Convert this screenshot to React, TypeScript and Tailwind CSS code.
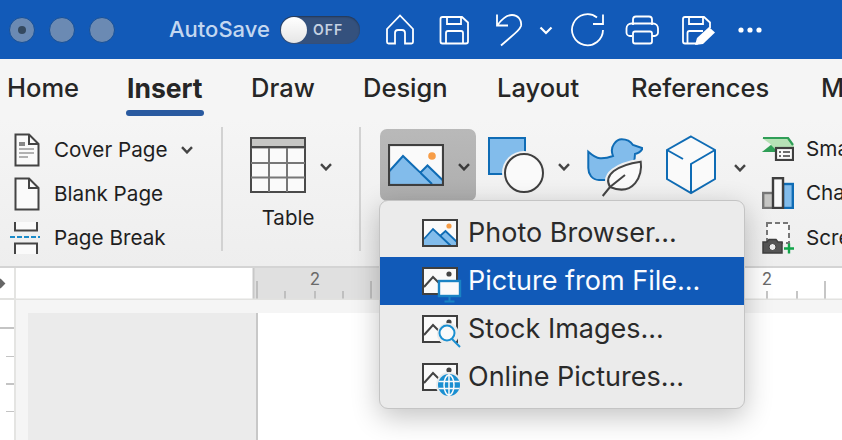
import React from 'react';

const FONT = 'font-["Inter","Noto_Sans",sans-serif]';

function Chevron({ className = '', color = '#444' }: { className?: string; color?: string }) {
  return (
    <svg width="12" height="8" viewBox="0 0 12 8" className={className} fill="none">
      <path d="M1 1.2 6 6.4 11 1.2" stroke={color} strokeWidth="2.4" />
    </svg>
  );
}

function TitleIcons() {
  return (
    <svg width="380" height="36" viewBox="386 9 380 36" fill="none" stroke="#fff" strokeWidth="1.800" className="ml-[26px] shrink-0">
      {/* home */}
      <path d="M387 26 400 12.5 413 26V39a1.5 1.5 0 0 1-1.5 1.5H405V30a3 3 0 0 0-3-3h-4a3 3 0 0 0-3 3V40.500H388.500A1.500 1.500 0 0 1 387 39Z" />
      {/* save */}
      <path d="M442.500 14H462L468 19.500V38.500a2 2 0 0 1-2 2H442.500a2 2 0 0 1-2-2V16a2 2 0 0 1 2-2Z" />
      <path d="M447 14V21H461V14M446 40.500V30a2 2 0 0 1 2-2H461a2 2 0 0 1 2 2V40.500" />
      {/* undo */}
      <path d="M497 11.500V22.500H508M497.500 22C502 16 507 12 512 12C518 12 522 17 521 23C520 26 519 27 501 42.500" />
      <path d="M540.500 24.500 546 30 551.500 24.500" strokeWidth="2.200" />
      {/* redo */}
      <path d="M603 27A15.500 15.500 0 1 1 597 14.500M603 11.500V21H593" />
      <path d="M633 22V16.500a3 3 0 0 1 3-3H649a3 3 0 0 1 3 3V22" />
      <path d="M632 33H630a3.500 3.500 0 0 1-3.500-3.500V25.500a5 5 0 0 1 5-5H653a5 5 0 0 1 5 5V29.500a3.500 3.500 0 0 1-3.500 3.500H652" />
      <rect x="633" y="28.500" width="19" height="12" rx="2" />
      {/* save as */}
      <path d="M698 40.500H685a2 2 0 0 1-2-2V16a2 2 0 0 1 2-2H704L710 19.500V25" />
      <path d="M689 14V21H703V14M687.500 40.500V30a2 2 0 0 1 2-2H703" />
      <path d="M695 42 697 35 709 24 715 29.500 703 41Z" fill="#fff" stroke="none" />
      <circle cx="741" cy="27" r="2.600" fill="#fff" stroke="none" />
      <circle cx="750" cy="27" r="2.600" fill="#fff" stroke="none" />
      <circle cx="759" cy="27" r="2.600" fill="#fff" stroke="none" />
    </svg>
  );
}

function CoverIcon() {
  return (
    <svg width="26" height="34" viewBox="0 0 26 34" fill="none" className="shrink-0">
      <path d="M1.500 1.500H15L24.500 11V32.500H1.500Z" fill="#fafafa" stroke="#444" strokeWidth="2" />
      <path d="M15 1.500V11H24.500" stroke="#444" strokeWidth="2" />
      <rect x="5" y="9" width="6" height="4" fill="#888" />
      <path d="M5 16H20M5 20H20M5 24H14" stroke="#999" strokeWidth="1.500" />
    </svg>
  );
}

function BlankIcon() {
  return (
    <svg width="26" height="34" viewBox="0 0 26 34" fill="none" className="shrink-0">
      <path d="M1.500 1.500H15L24.500 11V32.500H1.500Z" fill="#fafafa" stroke="#444" strokeWidth="2" />
      <path d="M15 1.500V11H24.500" stroke="#444" strokeWidth="2" />
    </svg>
  );
}

function BreakIcon() {
  return (
    <svg width="30" height="32" viewBox="0 0 30 32" fill="none" className="shrink-0 -ml-1">
      <path d="M5 0V8.500H27V0M5 32V21.500H27V32" stroke="#444" strokeWidth="2" fill="#fafafa" />
      <path d="M0 15H30" stroke="#1a8bc9" strokeWidth="1.800" strokeDasharray="5 2" />
    </svg>
  );
}

function TableIcon() {
  return (
    <svg width="56" height="56" viewBox="0 0 56 56" fill="none" className="shrink-0">
      <rect x="1" y="1" width="54" height="54" fill="#fafafa" stroke="#4a4a4a" strokeWidth="2" />
      <rect x="2" y="2" width="52" height="8" fill="#c6c6c4" />
      <path d="M1 10.500H55M1 26H55M1 40.500H55M19 10V55M37 10V55" stroke="#777" strokeWidth="2" />
      <path d="M1 10H55" stroke="#4a4a4a" strokeWidth="2" />
    </svg>
  );
}

function PictureIcon() {
  return (
    <svg width="56" height="42" viewBox="0 0 56 42" fill="none" className="shrink-0">
      <rect x="1" y="1" width="54" height="40" fill="#fafafa" />
      <path d="M1.500 27 15 12 32 30 39.500 21.500 55 37V41H1.500Z" fill="#82bceb" stroke="none" />
      <path d="M1.500 27 15 12 44 40M32 29 39.500 21.500 55 36.500" stroke="#0f6cb5" strokeWidth="2" />
      <circle cx="44" cy="12" r="3.800" fill="#f79d47" />
      <rect x="1" y="1" width="54" height="40" stroke="#3f3f3f" strokeWidth="2.200" />
    </svg>
  );
}

function ShapesIcon() {
  return (
    <svg width="58" height="56" viewBox="0 0 58 56" fill="none" className="shrink-0">
      <rect x="1" y="1" width="36" height="36" fill="#82bceb" stroke="#0f6cb5" strokeWidth="2" />
      <circle cx="36" cy="36" r="22" fill="#f0f0f0" />
      <circle cx="36" cy="36" r="19" fill="#fafafa" stroke="#3f3f3f" strokeWidth="2" />
    </svg>
  );
}

function IconsIcon() {
  return (
    <svg width="56" height="62" viewBox="0 0 56 62" fill="none" className="shrink-0">
      <path d="M1.300 14.700C5 18 9 21 13 21.300C18 21.600 22 20.500 26 19C24 14 25 9.700 27 7C29.500 3.500 32 2.300 34.700 2.300C40 2.300 44 5 46 8L55.700 11.300C54 14.500 51 16.500 48 17C48 28 40 43 18 43H12C5 43 1.300 37 1.300 31Z" fill="#82bceb" stroke="#0f6cb5" strokeWidth="2" />
      <path d="M23 50C16 38 30 28 53.700 24.700C56 38 47 60 23 50Z" fill="#f0f0f0" stroke="#f0f0f0" strokeWidth="6" />
      <path d="M23 50C16 38 30 28 53.700 24.700C56 38 47 60 23 50Z" fill="#fafafa" stroke="#444" strokeWidth="2" />
      <path d="M15.700 59 23 50 38 38" stroke="#444" strokeWidth="2" />
    </svg>
  );
}

function CubeIcon() {
  return (
    <svg width="52" height="60" viewBox="0 0 52 60" fill="none" className="shrink-0">
      <path d="M26 1.500 50 15V44L26 58 2 44V15Z" fill="#fafafa" stroke="#0f6cb5" strokeWidth="2" />
      <path d="M50 15 26 29V58M2 15 18 24" stroke="#0f6cb5" strokeWidth="2" />
    </svg>
  );
}

function SmartIcon() {
  return (
    <svg width="32" height="24" viewBox="0 0 32 24" fill="none" className="shrink-0">
      <path d="M0 1H26L32 9V15H0L9 7.500Z" fill="#b6e2b6" />
      <path d="M1 1H26L31 8" stroke="#2f9e57" strokeWidth="2.200" />
      <path d="M0 15H14V13L9 8Z" fill="#2f9e57" />
      <rect x="14" y="11" width="17" height="12" fill="#fafafa" stroke="#3f3f3f" strokeWidth="2.200" />
      <path d="M17 15H19M21 15H28M17 19H19M21 19H28" stroke="#3f3f3f" strokeWidth="1.600" />
    </svg>
  );
}

function ChartIcon() {
  return (
    <svg width="32" height="32" viewBox="0 0 32 32" fill="none" className="shrink-0">
      <rect x="1.200" y="16" width="11" height="15" fill="#c6c6c4" stroke="#777" strokeWidth="2.400" />
      <rect x="21" y="7" width="9.800" height="24" fill="#82bceb" stroke="#0f6cb5" strokeWidth="2.400" />
      <rect x="11" y="1.200" width="10" height="29.800" fill="#fafafa" stroke="#3f3f3f" strokeWidth="2.400" />
    </svg>
  );
}

function ScreenIcon() {
  return (
    <svg width="32" height="32" viewBox="0 0 32 32" fill="none" className="shrink-0">
      <rect x="5" y="1" width="22" height="20" fill="#f8f8f8" stroke="#777" strokeWidth="2" strokeDasharray="5 3" />
      <path d="M1 31V20H5L7 17.500H14L16 20H20V31Z" fill="#555" stroke="#3f3f3f" strokeWidth="1.500" />
      <circle cx="10.500" cy="25" r="3.500" fill="#ececec" stroke="#3f3f3f" strokeWidth="1" />
      <path d="M22 26.500H32M27 21.500V31.500" stroke="#12a54a" strokeWidth="2.400" />
    </svg>
  );
}

function MiniPicture({ dark, children }: { dark?: boolean; children?: React.ReactNode }) {
  return (
    <svg width="38" height="32" viewBox="0 0 38 32" fill="none" className="shrink-0 overflow-visible">
      <rect x="1" y="1" width="34" height="26" fill="#fafafa" />
      {dark ? (
        <>
          <path d="M2 20 11 10 18 17M22 10" stroke="#444" strokeWidth="2" />
          <circle cx="27" cy="7" r="2.600" fill="#444" />
        </>
      ) : (
        <>
          <path d="M2 20 11 10 18 17 23.500 12 35 23V26H2Z" fill="#82bceb" />
          <path d="M2 20 11 10 29 27M18 17 23.500 12 35 23" stroke="#0f6cb5" strokeWidth="1.800" />
          <circle cx="27" cy="7" r="2.600" fill="#f79d47" />
        </>
      )}
      <rect x="1" y="1" width="34" height="26" stroke="#3f3f3f" strokeWidth="2" />
      {children}
    </svg>
  );
}

function MenuRow({ label, selected, children }: { label: string; selected?: boolean; children: React.ReactNode }) {
  return (
    <div className={`flex h-[48px] items-center pl-[42px] ${selected ? 'bg-[#115ab8] text-[#fafcff]' : 'text-[#2a2a2a]'}`}>
      <div className="w-[46px] shrink-0 pt-1">{children}</div>
      <span className="pb-[2px] text-[27px] leading-none whitespace-nowrap">{label}</span>
    </div>
  );
}

function InsertMenu() {
  return (
    <div className="absolute left-[379px] top-[200px] z-10 w-[366px] h-[209px] overflow-hidden rounded-[9px] border border-[#c4c4c4] bg-[#ebebeb] pt-[8px] shadow-[0_8px_28px_rgba(0,0,0,0.24)]">
      <MenuRow label="Photo Browser...">
        <MiniPicture />
      </MenuRow>
      <MenuRow label="Picture from File..." selected>
        <MiniPicture dark>
          <rect x="17" y="14" width="21" height="15" fill="#fafafa" stroke="#1a83c4" strokeWidth="2.400" />
          <path d="M27.500 29V34M22.500 34.500H32.500" stroke="#1a83c4" strokeWidth="2" />
        </MiniPicture>
      </MenuRow>
      <MenuRow label="Stock Images...">
        <MiniPicture dark>
          <circle cx="26" cy="19" r="11" fill="#ebebeb" />
          <circle cx="25" cy="18" r="7.500" fill="#fafafa" stroke="#1a8fd1" strokeWidth="2" />
          <path d="M30 24 38 32" stroke="#1a8fd1" strokeWidth="2" />
        </MiniPicture>
      </MenuRow>
      <MenuRow label="Online Pictures...">
        <MiniPicture dark>
          <circle cx="27" cy="22" r="13" fill="#ebebeb" />
          <circle cx="27" cy="22" r="11" fill="#1a8fd1" />
          <ellipse cx="27" cy="22" rx="5" ry="10" stroke="#fafafa" strokeWidth="1.500" />
          <path d="M16.500 18.500H37.500M16.500 25.500H37.500M27 11V33" stroke="#fafafa" strokeWidth="1.500" />
        </MiniPicture>
      </MenuRow>
    </div>
  );
}

function Ruler() {
  return (
    <svg width="826" height="32" viewBox="16 268 826 32" className="block" fontFamily="Inter, sans-serif">
      <rect x="16" y="268" width="826" height="32" fill="#fff" />
      <rect x="253" y="268" width="380" height="32" fill="#e0e0e0" />
      <path d="M253.500 268V300" stroke="#c8c8c8" strokeWidth="2" />
      <path d="M257 281V299M371 281V299M285 291V299M315 291V299M343 291V299M767 291V299M797 291V299M825 281V299" stroke="#b4b4b4" strokeWidth="1.500" />
      <path d="M16 299.500H842" stroke="#e2e2e0" strokeWidth="2" />
      <text x="315" y="285" fontSize="17" fill="#6a6a6a" textAnchor="middle">2</text>
      <text x="767" y="285" fontSize="17" fill="#6a6a6a" textAnchor="middle">2</text>
    </svg>
  );
}

export default function App() {
  return (
    <div className={`relative w-[842px] h-[440px] overflow-hidden bg-white ${FONT}`}>
      {/* title bar */}
      <div className="flex h-[59px] items-center bg-[#125ab8] pl-[9px]">
        <div className="flex gap-[14px]">
          <div className="flex h-[26px] w-[26px] items-center justify-center rounded-full border border-[#175097] bg-[#6b8ab3]">
            <div className="h-[8px] w-[8px] rounded-full bg-[#34495f]" />
          </div>
          <div className="h-[26px] w-[26px] rounded-full border border-[#175097] bg-[#6b8ab3]" />
          <div className="h-[26px] w-[26px] rounded-full border border-[#175097] bg-[#6b8ab3]" />
        </div>
        <span className="ml-[54px] w-[111px] shrink-0 text-[22px] font-medium text-[#c3d7f0] whitespace-nowrap">AutoSave</span>
        <div className="flex h-[28px] w-[80px] shrink-0 items-center rounded-full bg-[#34517d] pl-[1px] shadow-[inset_0_1px_2px_rgba(0,0,0,0.35)]">
          <div className="h-[26px] w-[26px] rounded-full bg-gradient-to-b from-white to-[#e6e6e6]" />
          <span className="ml-[6px] text-[14px] font-semibold tracking-[1px] text-[#c6d2e2]">OFF</span>
        </div>
        <TitleIcons />
      </div>

      {/* tabs */}
      <div className="relative flex h-[61px] items-start bg-[#f5f5f5] pt-[13px] text-[25.500px] leading-[32px] text-[#262626]">
        <span className="ml-[7px] w-[120px] shrink-0 font-medium">Home</span>
        <div className="w-[124px] shrink-0">
          <span className="font-bold text-[26.500px]">Insert</span>
          <div className="mt-[5px] -ml-px h-[6px] w-[78px] rounded-full bg-[#2a5aa0]" />
        </div>
        <span className="w-[112px] shrink-0 font-medium">Draw</span>
        <span className="w-[134px] shrink-0 font-medium">Design</span>
        <span className="w-[134px] shrink-0 font-medium">Layout</span>
        <span className="w-[190px] shrink-0 font-medium">References</span>
        <span className="shrink-0 font-medium">M</span>
      </div>

      {/* ribbon */}
      <div className="flex h-[148px] items-start overflow-hidden bg-gradient-to-b from-[#f5f5f5] to-[#eeeeee] border-b-2 border-[#d4d4d4] text-[#1f1f1f]">
        <div className="flex w-[221px] shrink-0 flex-col pl-[14px] pt-[13px] text-[20.700px]">
          <div className="flex h-[34px] items-center">
            <CoverIcon />
            <span className="ml-[14px] whitespace-nowrap">Cover Page</span>
            <Chevron className="ml-[13px]" />
          </div>
          <div className="mt-[10px] flex h-[34px] items-center">
            <BlankIcon />
            <span className="ml-[14px]">Blank Page</span>
          </div>
          <div className="mt-[10px] flex h-[34px] items-center">
            <BreakIcon />
            <span className="ml-[14px]">Page Break</span>
          </div>
        </div>
        <div className="mt-[7px] h-[124px] w-[2px] shrink-0 bg-[#d2d2d2]" />

        <div className="w-[136px] shrink-0 pl-[27px] pt-[17px]">
          <div className="flex items-center">
            <TableIcon />
            <Chevron className="ml-[14px] mt-[3px]" />
          </div>
          <div className="mt-[11px] w-[80px] text-center text-[20.500px] leading-[28px] -ml-[2px]">Table</div>
        </div>
        <div className="mt-[7px] h-[124px] w-[2px] shrink-0 bg-[#d2d2d2]" />

        <div className="ml-[19px] mt-[9px] flex h-[72px] w-[96px] shrink-0 items-center rounded-[7px] bg-gradient-to-b from-[#b9b9b9] to-[#aeaeae] pl-[8px]">
          <PictureIcon />
          <Chevron className="ml-[14px] mt-[3px]" color="#3a3a3a" />
        </div>
        <div className="ml-[12px] mt-[17px] flex shrink-0 items-center">
          <ShapesIcon />
          <Chevron className="ml-[12px] mt-[3px]" />
        </div>
        <div className="ml-[17px] mt-[17px] shrink-0">
          <IconsIcon />
        </div>
        <div className="ml-[22px] mt-[15px] flex shrink-0 items-center">
          <CubeIcon />
          <Chevron className="ml-[17px] mt-[5px]" />
        </div>
        <div className="ml-[16px] flex shrink-0 flex-col pt-[17px] text-[20.700px]">
          <div className="flex h-[24px] items-center">
            <SmartIcon />
            <span className="ml-[12px]">Sma</span>
          </div>
          <div className="mt-[16px] flex h-[32px] items-center">
            <ChartIcon />
            <span className="ml-[12px]">Cha</span>
          </div>
          <div className="mt-[13px] flex h-[32px] items-center">
            <ScreenIcon />
            <span className="ml-[12px]">Scre</span>
          </div>
        </div>
      </div>

      {/* ruler + document */}
      <div className="flex h-[172px]">
        <div className="flex w-[16px] shrink-0 flex-col border-r-2 border-[#e4e4e2] bg-white">
          <div className="flex h-[32px] items-center border-b-2 border-[#e2e2e0]">
            <div className="h-[7px] w-[7px] -ml-[3px] rotate-45 bg-[#666]" />
          </div>
          <div className="mt-[27px] h-[1.500px] w-[14px] bg-[#c4c4c4]" />
          <div className="ml-[6px] mt-[27px] h-[1.500px] w-[8px] bg-[#c4c4c4]" />
          <div className="ml-[6px] mt-[26px] h-[1.500px] w-[8px] bg-[#c4c4c4]" />
          <div className="ml-[6px] mt-[26px] h-[1.500px] w-[8px] bg-[#c4c4c4]" />
        </div>
        <div className="flex min-w-0 flex-1 flex-col">
          <Ruler />
          <div className="h-[13px] shrink-0 bg-[#f5f5f5]" />
          <div className="flex flex-1">
            <div className="w-[12px] shrink-0 bg-[#f5f5f5]" />
            <div className="w-[230px] shrink-0 border-r-2 border-[#c8c8c8] bg-[#ebebeb]" />
            <div className="flex-1 bg-white" />
          </div>
        </div>
      </div>

      <InsertMenu />
    </div>
  );
}
